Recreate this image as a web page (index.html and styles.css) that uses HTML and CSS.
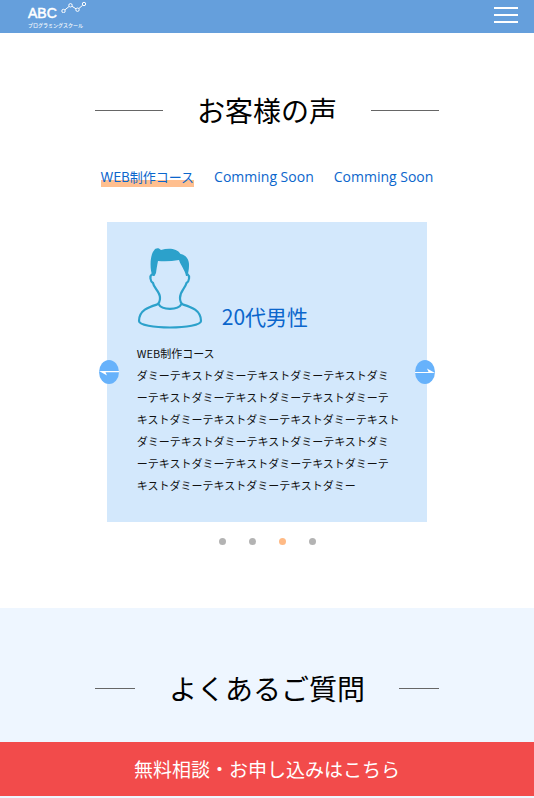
FILE: index.html
```html
<!DOCTYPE html>
<html lang="ja">
<head>
<meta charset="utf-8">
<meta name="viewport" content="width=device-width, initial-scale=1">
<title>ABC プログラミングスクール</title>
<link rel="stylesheet" href="styles.css">
</head>
<body>
<header class="header">
  <a class="logo" href="#" aria-label="ABC プログラミングスクール">
    <span class="logo-top">
      <span class="logo-name">ABC</span>
      <svg class="logo-mark" width="26" height="13" viewBox="0 0 26 13" fill="none" stroke="#fff" stroke-width="1"><circle cx="2.500" cy="11" r="1.7"/><circle cx="9.500" cy="5.300" r="1.7"/><circle cx="16.500" cy="9.700" r="1.7"/><circle cx="23" cy="4" r="1.7"/><path d="M4 9.800L8 6.500M11 6.300L15 8.800M17.900 8.500L21.600 5.300"/></svg>
    </span>
    <span class="logo-sub">プログラミングスクール</span>
  </a>
  <button class="menu" type="button" aria-label="メニュー"><span></span><span></span><span></span></button>
</header>
<main>
  <section class="voices">
    <h2 class="heading">お客様の声</h2>
    <nav class="tabs">
      <a class="tab tab-active" href="#">WEB制作コース</a>
      <a class="tab tab-soon" href="#">Comming Soon</a>
      <a class="tab tab-soon" href="#">Comming Soon</a>
    </nav>
    <div class="slider">
      <article class="card">
        <div class="person">
          <svg width="66" height="81" viewBox="0 0 66 81"><g fill="none" stroke="#2ca1cb" stroke-width="2.200" stroke-linejoin="round"><path d="M15 26C12.500 28 13 33 16 35C17 41 23 43 23 50C23 53 22.500 55 20 56.500C12 59 2 62 2 73C2 77 17 79.500 33 79.500S64 77 64 73C64 62 54 59 46 56.500C43.500 55 43 53 43 50C43 43 48 41 49.500 35C52.500 33 53 28 50.500 26"/><path d="M21.500 56C25 62.500 41 62.500 44.500 56"/></g><path fill="#2ca1cb" d="M15.500 28C12.500 21 13 7 17 2.500C18 0.500 20 0 22 0.500L24 2C31 0 40 0 43.500 6C50 7 52.500 13 52 18C52 22 51 25 50.500 28H49C48 22 44 18 42 12Q31 14 21 13C20 18 19.500 21 19 25L17.500 28Z"/></svg>
          <h3 class="name">20代男性</h3>
        </div>
        <p class="text">WEB制作コース<br>ダミーテキストダミーテキストダミーテキストダミ<br>ーテキストダミーテキストダミーテキストダミーテ<br>キストダミーテキストダミーテキストダミーテキスト<br>ダミーテキストダミーテキストダミーテキストダミ<br>ーテキストダミーテキストダミーテキストダミーテ<br>キストダミーテキストダミーテキストダミー</p>
      </article>
      <button class="arrow arrow-prev" type="button" aria-label="前へ"><svg width="20" height="24" viewBox="0 0 20 24"><path fill="#fff" d="M20 11V12.200H6.500L8 15.500L0 11Z"/></svg></button>
      <button class="arrow arrow-next" type="button" aria-label="次へ"><svg width="20" height="24" viewBox="0 0 20 24"><path fill="#fff" d="M0 13V11.900H13.500L12 8.500L20 13Z"/></svg></button>
    </div>
    <div class="dots">
      <button class="dot" type="button" aria-label="1"></button>
      <button class="dot" type="button" aria-label="2"></button>
      <button class="dot dot-active" type="button" aria-label="3"></button>
      <button class="dot" type="button" aria-label="4"></button>
    </div>
  </section>
  <section class="faq">
    <h2 class="heading">よくあるご質問</h2>
  </section>
</main>
<a class="cta" href="#">無料相談・お申し込みはこちら</a>
</body>
</html>
```
FILE: styles.css
```css
* {
  box-sizing: border-box;
}

body {
  margin: 0;
  font-family: "Noto Sans CJK JP", sans-serif;
  font-weight: 400;
  color: #111;
  background: #fff;
}

a {
  text-decoration: none;
}

h2,
h3,
p {
  margin: 0;
  font-weight: 400;
}

button {
  border: 0;
  padding: 0;
  cursor: pointer;
}

.header {
  display: flex;
  justify-content: space-between;
  align-items: flex-start;
  height: 33px;
  padding: 0 16px 0 28px;
  background: #659fdc;
}

.logo {
  display: flex;
  flex-direction: column;
  color: #fff;
}

.logo-top {
  display: flex;
  gap: 4px;
}

.logo-name {
  padding-top: 5px;
  font: 14px/16px "Liberation Sans", sans-serif;
  -webkit-text-stroke: 0.5px #fff;
}

.logo-sub {
  font-size: 5px;
  font-weight: 500;
  line-height: 8px;
}

.menu {
  display: flex;
  flex-direction: column;
  gap: 5px;
  width: 24px;
  padding-top: 7px;
  background: none;
}

.menu span {
  height: 2px;
  background: #fff;
}

.voices {
  padding: 56px 0 63px;
}

.heading {
  display: flex;
  align-items: center;
  gap: 34px;
  width: calc(100% - 190px);
  max-width: 600px;
  margin: 0 auto;
  font-size: 28px;
  line-height: 42px;
  white-space: nowrap;
  color: #000;
}

.heading::before,
.heading::after {
  content: "";
  flex: 1;
  height: 1px;
  background: #666;
}

.tabs {
  display: flex;
  justify-content: center;
  gap: 20px;
  margin-top: 36px;
}

.tab {
  font-family: Inter, "Noto Sans CJK JP", sans-serif;
  font-size: 13px;
  line-height: 20px;
  color: #0b66cc;
}

.tab-active {
  background: linear-gradient(transparent 65%, #ffbf8f 65%);
}

.tab-soon {
  font-family: "Open Sans", sans-serif;
  font-size: 14px;
}

.slider {
  position: relative;
  width: 60%;
  max-width: 600px;
  margin: 35px auto 0;
}

.card {
  padding: 26px 20px 26px 30px;
  background: #d3e8fc;
}

.person {
  display: flex;
  align-items: flex-end;
  gap: 19px;
}

.name {
  font-size: 21px;
  line-height: 26px;
  color: #0b66cc;
}

.text {
  margin-top: 13px;
  font-size: 11px;
  line-height: 22px;
  white-space: nowrap;
}

.arrow {
  position: absolute;
  top: 138px;
  width: 20px;
  height: 24px;
  border-radius: 50%;
  background: #67b2fb;
}

.arrow svg {
  display: block;
}

.arrow-prev {
  left: -8px;
}

.arrow-next {
  right: -8px;
}

.dots {
  display: flex;
  justify-content: center;
  gap: 23px;
  margin-top: 16px;
}

.dot {
  width: 7px;
  height: 7px;
  border-radius: 50%;
  background: #b3b3b3;
}

.dot-active {
  background: #ffba85;
}

.faq {
  padding: 59px 0 89px;
  background: #eef6ff;
}

.cta {
  position: fixed;
  right: 0;
  bottom: 2px;
  left: 0;
  font-size: 19px;
  line-height: 54px;
  text-align: center;
  color: #fff;
  background: #f24b4b;
}
```
